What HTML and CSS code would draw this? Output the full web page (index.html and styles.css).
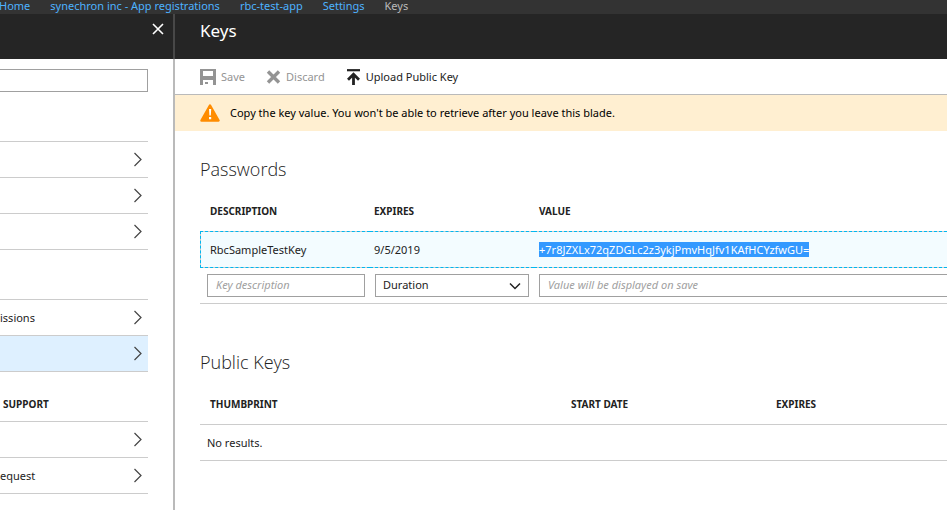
FILE: index.html
```html
<!DOCTYPE html>
<html lang="en">
<head>
<meta charset="utf-8">
<title>Keys</title>
<link rel="stylesheet" href="styles.css">
</head>
<body>
<svg class="defs" aria-hidden="true">
  <symbol id="chevron" viewBox="0 0 10 16"><path d="M1.500 1 8 7.500 1.500 14" fill="none" stroke="currentColor" stroke-width="1.200"/></symbol>
</svg>
<nav class="crumbs">
  <a href="#">Home</a>
  <a href="#">synechron inc - App registrations</a>
  <a href="#">rbc-test-app</a>
  <a href="#">Settings</a>
  <span>Keys</span>
</nav>
<div class="blades">
  <aside class="settings">
    <header class="blade-head side-head">
      <button class="close" aria-label="Close">
        <svg width="12" height="12" viewBox="0 0 12 12"><path d="M1 1l10 10M11 1 1 11" stroke="currentColor" stroke-width="1.600"/></svg>
      </button>
    </header>
    <div class="side-body">
      <input class="search" type="text" aria-label="Filter settings">
      <ul class="menu">
        <li><a href="#"><span></span><svg><use href="#chevron"/></svg></a></li>
        <li><a href="#"><span></span><svg><use href="#chevron"/></svg></a></li>
        <li><a href="#"><span></span><svg><use href="#chevron"/></svg></a></li>
      </ul>
      <ul class="menu">
        <li><a href="#"><span>issions</span><svg><use href="#chevron"/></svg></a></li>
        <li><a href="#" class="active"><span></span><svg><use href="#chevron"/></svg></a></li>
      </ul>
      <h3 class="group">SUPPORT</h3>
      <ul class="menu last">
        <li><a href="#"><span></span><svg><use href="#chevron"/></svg></a></li>
        <li><a href="#"><span>equest</span><svg><use href="#chevron"/></svg></a></li>
      </ul>
    </div>
  </aside>
  <main class="keys">
    <header class="blade-head"><h1>Keys</h1></header>
    <div class="toolbar">
      <button disabled>
        <svg width="16" height="16" viewBox="0 0 16 16"><path fill="currentColor" fill-rule="evenodd" d="M0 0h16v16h-3v-5H3v5H0zM3 2v5h10V2zM5 13h3v2H5z"/></svg>
        Save
      </button>
      <button disabled>
        <svg width="15" height="14" viewBox="0 0 15 14"><path d="M2 1.500l11 11M13 1.500l-11 11" stroke="currentColor" stroke-width="3.400"/></svg>
        Discard
      </button>
      <button>
        <svg width="15" height="16" viewBox="0 0 15 16"><path d="M1 1.200h13" stroke="currentColor" stroke-width="2.200"/><path d="M7.500 16V6M2 10.800 7.500 5.300l5.500 5.500" fill="none" stroke="currentColor" stroke-width="2.800"/></svg>
        Upload Public Key
      </button>
    </div>
    <div class="notice" role="status">
      <svg width="20" height="18" viewBox="0 0 20 18"><path d="M10 1.500 18.500 16.500h-17z" fill="#ff8c00" stroke="#ff8c00" stroke-width="2.500" stroke-linejoin="round"/><path d="M9 5h2.200l-.4 6.500H9.400zM9 13h2.200v2.200H9z" fill="#fff"/></svg>
      <span>Copy the key value. You won't be able to retrieve after you leave this blade.</span>
    </div>
    <section class="group-block">
      <h2>Passwords</h2>
      <table class="grid passwords">
        <thead><tr><th class="c-desc">DESCRIPTION</th><th class="c-exp">EXPIRES</th><th>VALUE</th></tr></thead>
        <tbody>
          <tr class="selected"><td>RbcSampleTestKey</td><td>9/5/2019</td><td><mark>+7r8JZXLx72qZDGLc2z3ykjPmvHqJfv1KAfHCYzfwGU=</mark></td></tr>
          <tr class="entry">
            <td><input type="text" placeholder="Key description" aria-label="Key description"></td>
            <td><div class="picker"><select aria-label="Duration"><option>Duration</option></select><svg width="12" height="8" viewBox="0 0 12 8"><path d="M1 1.500l5 5 5-5" fill="none" stroke="#222" stroke-width="1.500"/></svg></div></td>
            <td><input type="text" placeholder="Value will be displayed on save" aria-label="Value"></td>
          </tr>
        </tbody>
      </table>
    </section>
    <section class="group-block">
      <h2>Public Keys</h2>
      <table class="grid public">
        <thead><tr><th class="c-thumb">THUMBPRINT</th><th class="c-start">START DATE</th><th>EXPIRES</th></tr></thead>
        <tbody><tr><td colspan="3">No results.</td></tr></tbody>
      </table>
    </section>
  </main>
</div>
</body>
</html>
```
FILE: styles.css
```css
* { box-sizing: border-box; }

body {
  margin: 0;
  min-height: 100vh;
  display: flex;
  flex-direction: column;
  overflow: hidden;
  font: 11px/16px "Noto Sans", "Open Sans", sans-serif;
  color: #222;
  background: #fff;
}

button, input, select { font: inherit; color: inherit; border-radius: 0; }
h1, h2, h3, ul { margin: 0; padding: 0; font-weight: 400; }
a { color: inherit; text-decoration: none; }
svg { flex: none; }
.defs { position: absolute; width: 0; height: 0; }

.crumbs {
  height: 14px;
  display: flex;
  align-items: center;
  gap: 20px;
  margin-left: -1px;
  padding-bottom: 2px;
  line-height: 12px;
  background: #333;
  color: #bbb;
  white-space: nowrap;
}
.crumbs a { color: #4db2ff; }

.blades { flex: 1; display: flex; }
.settings { width: 175px; flex: none; border-right: 2px solid #bababa; }
.keys { flex: 1; min-width: 0; overflow: hidden; }

.blade-head { height: 45px; padding: 5px 25px; background: #252525; color: #fff; }
.blade-head h1 { font-size: 17px; line-height: 24px; }
.side-head {
  display: flex;
  justify-content: flex-end;
  align-items: flex-start;
  margin-right: -2px;
  padding: 9px 9px 0 0;
  border-right: 2px solid #484848;
}
.close { padding: 0; border: 0; background: none; color: #fff; line-height: 0; }

.side-body { padding: 10px 25px 0 0; }
.search {
  display: block;
  width: 100%;
  height: 23px;
  border: 1px solid #a0a0a0;
  border-left: 0;
}
.menu { list-style: none; margin-top: 49px; border-top: 1px solid #ccc; }
.menu a {
  display: flex;
  align-items: center;
  justify-content: space-between;
  height: 36px;
  padding-right: 5px;
  border-bottom: 1px solid #ccc;
}
.menu svg { width: 10px; height: 16px; color: #444; }
.menu .active { background: #def0ff; }
.group { margin: 24px 0 0 3px; line-height: 16px; font-size: 10px; font-weight: 700; }
.menu.last { margin-top: 9px; }

.toolbar {
  height: 36px;
  display: flex;
  align-items: center;
  gap: 21px;
  padding: 0 25px;
  border-bottom: 1px solid #bababa;
}
.toolbar button {
  display: flex;
  align-items: center;
  gap: 5px;
  padding: 0;
  border: 0;
  background: none;
}
.toolbar button:disabled { color: #949494; }

.notice {
  height: 36px;
  display: flex;
  align-items: center;
  gap: 10px;
  padding: 0 25px;
  background: #ffefd1;
  color: #000;
}

.group-block { padding: 26px 0 0 25px; }
.group-block + .group-block { padding-top: 46px; }
h2 { font-size: 18px; line-height: 24px; font-family: "Open Sans", "Noto Sans", sans-serif; font-weight: 300; }

.grid {
  width: calc(100% + 10px);
  margin-top: 14px;
  table-layout: fixed;
  border-collapse: separate;
  border-spacing: 0;
}
.grid th {
  height: 36px;
  padding: 0 0 4px;
  font-size: 10px;
  text-align: left;
}
.grid td { height: 36px; padding: 0; border-bottom: 1px solid #ccc; }
.grid th:first-child { padding-left: 10px; }
.c-desc { width: 170px; }
.c-exp { width: 164px; }
.c-thumb { width: 371px; }
.c-start { width: 205px; }

.passwords th + th, .passwords td + td { padding-left: 4px; }
.passwords th:last-child, .passwords td:last-child { padding-left: 5px; }
.passwords .selected td {
  height: 37px;
  background: linear-gradient(#f3fcff, #f3fcff) padding-box, #ccc border-box;
  border-top: 1px dashed #00b7f0;
  border-bottom: 1px dashed #00b7f0;
}
.passwords .selected td:first-child { padding-left: 9px; border-left: 1px dashed #00b7f0; }
.passwords mark { padding: 0; background: #39f; color: #fff; }
.passwords .entry td { padding: 0 5px; }
.passwords .entry td:first-child { padding-left: 7px; }
.entry input, .entry select {
  display: block;
  width: 100%;
  height: 23px;
  padding: 0 8px 2px;
  border: 1px solid #a0a0a0;
  background: #fff;
}
.entry select { appearance: none; padding: 0 7px 2px; }
.entry input::placeholder { color: #a0a0a0; font-style: italic; opacity: 1; }
.picker { display: grid; align-items: center; }
.picker > * { grid-area: 1 / 1; }
.picker svg { justify-self: end; margin-right: 8px; pointer-events: none; }

.public th { border-bottom: 1px solid #ccc; height: 37px; }
.public td { padding-left: 7px; }
```
